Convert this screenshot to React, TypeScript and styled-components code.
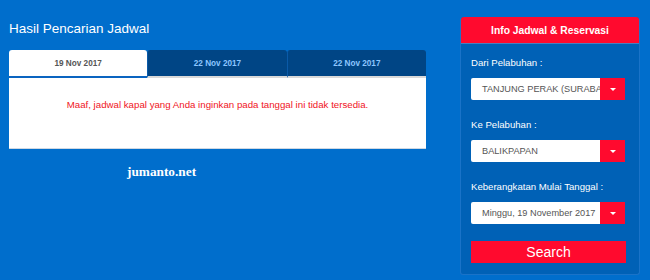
import React from "react";
import styled, { createGlobalStyle } from "styled-components";

const GlobalStyle = createGlobalStyle`
  html, body {
    margin: 0;
    padding: 0;
    background: #006ecc;
  }
  body {
    font-family: "Liberation Sans", Arial, sans-serif;
  }
`;

const Page = styled.div`
  width: 650px;
  height: 280px;
  display: flex;
  align-items: flex-start;
  gap: 34px;
  padding-left: 9px;
  box-sizing: border-box;
  overflow: hidden;
`;

const Results = styled.section`
  width: 417px;
  padding-top: 21px;
`;

const Heading = styled.h2`
  margin: 0 0 14px;
  font-size: 13.5px;
  line-height: 15px;
  font-weight: normal;
  color: #fff;
`;

const TabBar = styled.div`
  display: flex;
`;

const Tab = styled.div<{ $active?: boolean }>`
  flex: 1;
  height: 26px;
  display: flex;
  align-items: center;
  justify-content: center;
  font-size: 8.2px;
  font-weight: bold;
  border-radius: 3px 3px 0 0;
  background: ${(p) => (p.$active ? "#fff" : "#004585")};
  color: ${(p) => (p.$active ? "#555" : "#8cc6ff")};
  border-bottom: 2px solid ${(p) => (p.$active ? "#0a64c0" : "#d9d9d9")};
  & + & {
    border-left: 1px solid #0a5aa8;
  }
`;

const TabBody = styled.div`
  height: 71px;
  background: #fff;
  box-sizing: border-box;
  padding-top: 21px;
  text-align: center;
  font-size: 9.7px;
  color: #f0141e;
  border-bottom: 1px solid #cfd8e3;
`;

const Watermark = styled.div`
  margin: 15px 0 0 118px;
  font-family: "Liberation Serif", "Times New Roman", serif;
  font-weight: bold;
  font-size: 13.3px;
  color: #fff;
`;

const Panel = styled.aside`
  width: 180px;
  margin-top: 17px;
  height: 258px;
  background: #0061b6;
  border: 1px solid #1a73c8;
  border-top: none;
  border-radius: 3px;
  box-sizing: border-box;
`;

const PanelHeader = styled.div`
  height: 26px;
  background: #ff0a2e;
  border-radius: 3px 3px 0 0;
  border-bottom: 1px solid #4a7fc0;
  display: flex;
  align-items: center;
  justify-content: center;
  color: #fff;
  font-size: 10.3px;
  font-weight: bold;
`;

const Form = styled.div`
  padding: 13px 14px 0 10px;
`;

const Label = styled.div`
  font-size: 9.6px;
  line-height: 12px;
  color: #fff;
  margin-bottom: 9px;
  white-space: nowrap;
`;

const Field = styled.div`
  display: flex;
  height: 22px;
  margin-bottom: 19px;
`;

const Value = styled.div`
  flex: 1;
  min-width: 0;
  background: #fff;
  border-radius: 2px 0 0 2px;
  padding-left: 11px;
  display: flex;
  align-items: center;
  font-size: 9.2px;
  color: #555;
  white-space: nowrap;
  overflow: hidden;
`;

const Caret = styled.div`
  width: 25px;
  background: #ff0a2e;
  display: flex;
  align-items: center;
  justify-content: center;
  &::after {
    content: "";
    border-left: 3px solid transparent;
    border-right: 3px solid transparent;
    border-top: 3px solid #fff;
  }
`;

const SearchButton = styled.button`
  display: block;
  width: 155px;
  height: 22px;
  margin-top: -2px;
  border: none;
  background: #ff0a2e;
  color: #fff;
  font-family: "Liberation Sans", Arial, sans-serif;
  font-size: 14px;
  padding: 0;
`;

const fields = [
  { label: "Dari Pelabuhan :", value: "TANJUNG PERAK (SURABAYA)" },
  { label: "Ke Pelabuhan :", value: "BALIKPAPAN" },
  { label: "Keberangkatan Mulai Tanggal :", value: "Minggu, 19 November 2017" },
];

export default function App() {
  return (
    <>
      <GlobalStyle />
      <Page>
        <Results>
          <Heading>Hasil Pencarian Jadwal</Heading>
          <TabBar>
            <Tab $active>19 Nov 2017</Tab>
            <Tab>22 Nov 2017</Tab>
            <Tab>22 Nov 2017</Tab>
          </TabBar>
          <TabBody>Maaf, jadwal kapal yang Anda inginkan pada tanggal ini tidak tersedia.</TabBody>
          <Watermark>jumanto.net</Watermark>
        </Results>
        <Panel>
          <PanelHeader>Info Jadwal &amp; Reservasi</PanelHeader>
          <Form>
            {fields.map((f) => (
              <div key={f.label}>
                <Label>{f.label}</Label>
                <Field>
                  <Value>{f.value}</Value>
                  <Caret />
                </Field>
              </div>
            ))}
            <SearchButton>Search</SearchButton>
          </Form>
        </Panel>
      </Page>
    </>
  );
}
